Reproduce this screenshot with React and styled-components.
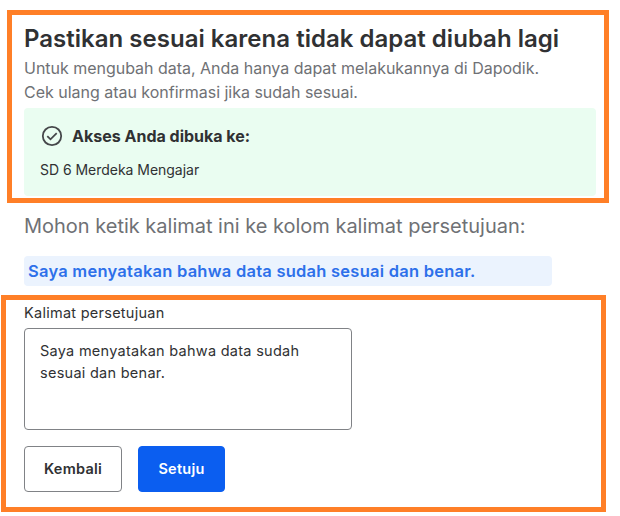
import React, { useState } from 'react';
import styled, { createGlobalStyle } from 'styled-components';

const GlobalStyle = createGlobalStyle`
  * {
    box-sizing: border-box;
  }
  body {
    margin: 0;
    background: #fff;
    font-family: Inter, sans-serif;
    color: #303133;
  }
`;

const Page = styled.main`
  width: 620px;
  height: 516px;
  padding-top: 10px;
  overflow: hidden;
`;

/* Orange frame around the parts that need attention */
const Highlight = styled.section`
  border: 5px solid #ff7f27;
`;

const AccessSection = styled(Highlight)`
  width: 602px;
  height: 193px;
  margin-left: 7px;
  padding: 8px 8px 0 12px;
`;

const FormSection = styled(Highlight)`
  width: 605px;
  height: 217px;
  margin: 9px 0 0 1px;
  padding: 3px 0 0 18px;
`;

const Title = styled.h1`
  margin: 0;
  font-size: 24px;
  line-height: 32px;
  font-weight: 600;
  letter-spacing: 0.02px;
  white-space: nowrap;
`;

const Description = styled.p`
  margin: 1px 0 4px;
  font-size: 16px;
  line-height: 24px;
  letter-spacing: -0.02px;
  color: #6f7175;
`;

const AccessCard = styled.div`
  height: 88px;
  padding: 16px;
  border-radius: 4px;
  background: #eafdf1;
`;

const AccessHeader = styled.div`
  display: flex;
  align-items: center;
  gap: 8px;
  height: 24px;
  font-size: 16px;
  font-weight: 700;
`;

const School = styled.p`
  margin: 12px 0 0;
  font-size: 14px;
  line-height: 20px;
  letter-spacing: -0.03px;
`;

const Statement = styled.div`
  padding: 7px 0 0 24px;
`;

const Instruction = styled.p`
  margin: 0;
  font-size: 20px;
  line-height: 32px;
  letter-spacing: -0.01px;
  color: #6f7175;
`;

const Sentence = styled.p`
  width: 528px;
  height: 30px;
  margin: 14px 0 0;
  padding: 0 4px;
  border-radius: 4px;
  background: #ebf3fe;
  color: #2d70ea;
  font-size: 16.5px;
  line-height: 30px;
  font-weight: 600;
  letter-spacing: 0.24px;
`;

const Label = styled.label`
  display: block;
  font-size: 14.5px;
  line-height: 20px;
  letter-spacing: 0.26px;
  margin-bottom: 5px;
`;

const TextArea = styled.textarea`
  display: block;
  width: 328px;
  height: 102px;
  padding: 11px 15px;
  border: 1px solid #808286;
  border-radius: 4px;
  resize: none;
  font: 14.5px/22px Inter, sans-serif;
  letter-spacing: 0.27px;
  color: #303133;
`;

const Actions = styled.div`
  display: flex;
  gap: 16px;
  margin-top: 16px;
`;

const Button = styled.button`
  width: ${({ $primary }) => ($primary ? '87px' : '98px')};
  height: 46px;
  padding: 0 0 2px;
  border: 1px solid ${({ $primary }) => ($primary ? '#0b5ef0' : '#808286')};
  border-radius: 4px;
  background: ${({ $primary }) => ($primary ? '#0b5ef0' : '#fff')};
  color: ${({ $primary }) => ($primary ? '#fff' : '#303133')};
  font: 600 14.5px Inter, sans-serif;
  letter-spacing: 0.25px;
  cursor: pointer;
`;

const CheckIcon = () => (
  <svg width="24" height="24" viewBox="0 0 24 24" fill="none" stroke="#45474a" strokeWidth="1.8">
    <circle cx="12" cy="12" r="9.2" />
    <path d="M7.3 12.1l3.2 3.2 6.2-6.2" />
  </svg>
);

const App = () => {
  const [sentence, setSentence] = useState('Saya menyatakan bahwa data sudah sesuai dan benar.');

  return (
    <>
      <GlobalStyle />
      <Page>
        <AccessSection>
          <Title>Pastikan sesuai karena tidak dapat diubah lagi</Title>
          <Description>
            Untuk mengubah data, Anda hanya dapat melakukannya di Dapodik.
            <br />
            Cek ulang atau konfirmasi jika sudah sesuai.
          </Description>
          <AccessCard>
            <AccessHeader>
              <CheckIcon />
              Akses Anda dibuka ke:
            </AccessHeader>
            <School>SD 6 Merdeka Mengajar</School>
          </AccessCard>
        </AccessSection>
        <Statement>
          <Instruction>Mohon ketik kalimat ini ke kolom kalimat persetujuan:</Instruction>
          <Sentence>Saya menyatakan bahwa data sudah sesuai dan benar.</Sentence>
        </Statement>
        <FormSection>
          <Label htmlFor="persetujuan">Kalimat persetujuan</Label>
          <TextArea
            id="persetujuan"
            spellCheck={false}
            value={sentence}
            onChange={(e) => setSentence(e.target.value)}
          />
          <Actions>
            <Button>Kembali</Button>
            <Button $primary>Setuju</Button>
          </Actions>
        </FormSection>
      </Page>
    </>
  );
};

export default App;
